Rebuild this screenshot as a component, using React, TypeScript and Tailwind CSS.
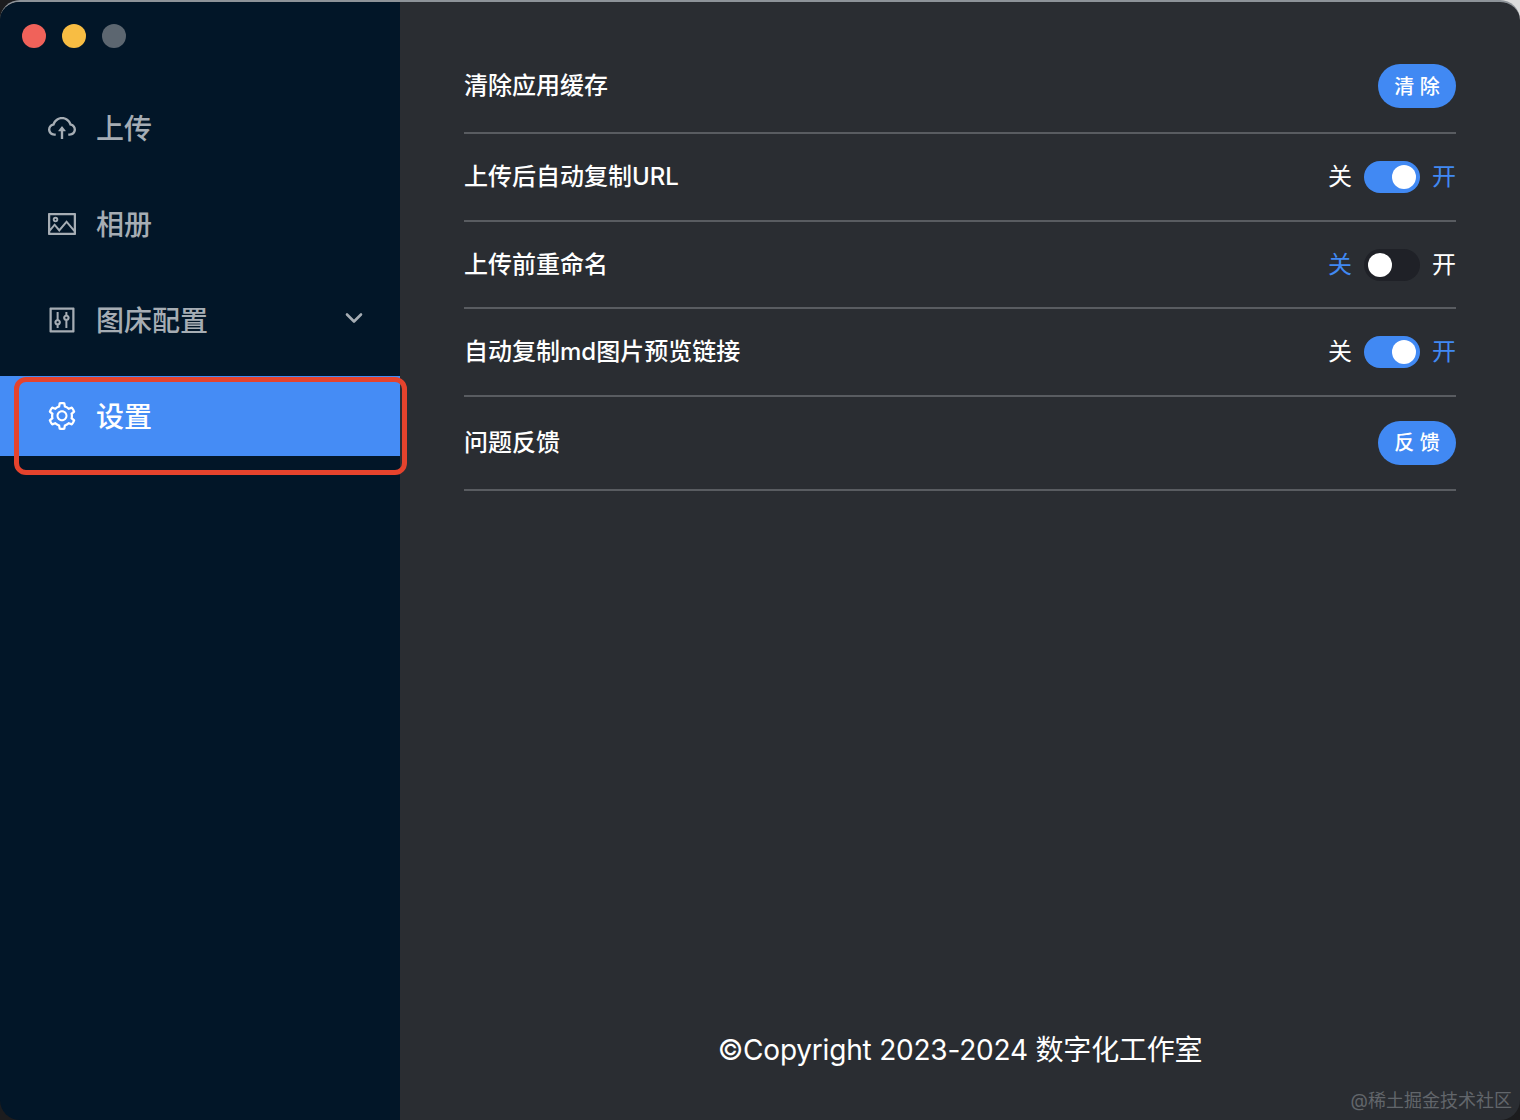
import React from "react";
import { AiOutlineCloudUpload, AiOutlinePicture, AiOutlineControl, AiOutlineSetting } from "react-icons/ai";

const cjk = '"Inter","Noto Sans CJK SC",sans-serif';

function Toggle({ on }: { on: boolean }) {
  return (
    <div className="flex items-center gap-3 text-[24px] leading-[32px]">
      <span className={on ? "text-white" : "text-[#4189f3]"}>关</span>
      <span className={`flex h-8 w-14 items-center rounded-full px-1 ${on ? "justify-end bg-[#4189f3]" : "justify-start bg-[#1f2127]"}`}>
        <span className="block h-6 w-6 rounded-full bg-white" />
      </span>
      <span className={on ? "text-[#4189f3]" : "text-white"}>开</span>
    </div>
  );
}

function Pill({ text }: { text: string }) {
  return (
    <button className="flex h-11 w-[78px] items-center justify-center rounded-full bg-[#4189f3] pt-px text-[20px] font-medium text-white">
      {text}
    </button>
  );
}

function Row({ label, height, children }: { label: string; height: string; children: React.ReactNode }) {
  return (
    <div className={`flex items-center justify-between border-b-2 border-[#595c61] text-[24px] text-white ${height}`}>
      <span className="font-medium">{label}</span>
      {children}
    </div>
  );
}

function NavItem({ icon, label, active, chevron }: { icon: React.ReactNode; label: string; active?: boolean; chevron?: boolean }) {
  return (
    <div className={`flex h-20 items-center pl-[46px] pr-9 text-[28px] ${active ? "bg-[#458cf5] text-white" : "text-[#a6adb4]"}`}>
      <span className="flex w-8 justify-center">{icon}</span>
      <span className="ml-[18px] pt-px font-medium">{label}</span>
      {chevron && (
        <svg className="-mt-1 ml-auto" width="20" height="12" viewBox="0 0 20 12" fill="none" stroke="currentColor" strokeWidth="2.6" strokeLinecap="round" strokeLinejoin="round">
          <path d="M3 2.5 10 9.5 17 2.5" />
        </svg>
      )}
    </div>
  );
}

export default function App() {
  return (
    <div className="relative h-[1120px] w-[1520px] overflow-hidden bg-[#1c1c1e]" style={{ fontFamily: cjk }}>
      <div className="absolute right-0 top-0 h-5 w-5 bg-[#dcdcdc]" />
      <div className="relative flex h-full overflow-hidden rounded-[20px] border-t-2 border-[#8d9399]">
        <aside className="flex h-full w-[400px] flex-col bg-[#021628]">
          <div className="flex h-[86px] gap-4 pl-[22px] pt-[22px]">
            <span className="h-6 w-6 rounded-full bg-[#f0625a]" />
            <span className="h-6 w-6 rounded-full bg-[#f8bd43]" />
            <span className="h-6 w-6 rounded-full bg-[#5c6670]" />
          </div>
          <nav className="flex flex-col gap-4">
            <NavItem icon={<AiOutlineCloudUpload size={32} />} label="上传" />
            <NavItem icon={<AiOutlinePicture size={32} />} label="相册" />
            <NavItem icon={<AiOutlineControl size={32} />} label="图床配置" chevron />
            <NavItem icon={<AiOutlineSetting size={32} />} label="设置" active />
          </nav>
        </aside>
        <main className="flex h-full flex-1 flex-col bg-[#2a2d32] px-16 pt-[38px]">
          <Row label="清除应用缓存" height="h-[94px]"><Pill text="清 除" /></Row>
          <Row label="上传后自动复制URL" height="h-[88px]"><Toggle on /></Row>
          <Row label="上传前重命名" height="h-[87px]"><Toggle on={false} /></Row>
          <Row label="自动复制md图片预览链接" height="h-[87.5px]"><Toggle on /></Row>
          <Row label="问题反馈" height="h-[94px]"><Pill text="反 馈" /></Row>
          <footer className="mb-[50px] mt-auto text-center text-[28px] leading-[40px] tracking-[-0.2px] text-white">©Copyright 2023-2024 数字化工作室</footer>
        </main>
      </div>
      <div className="absolute left-[14px] top-[377px] h-[98px] w-[393px] rounded-[12px] border-[5px] border-[#e5432d]" />
      <div className="absolute bottom-[6px] right-2 text-[18px] leading-[26px] text-[#62666b]">@稀土掘金技术社区</div>
    </div>
  );
}
